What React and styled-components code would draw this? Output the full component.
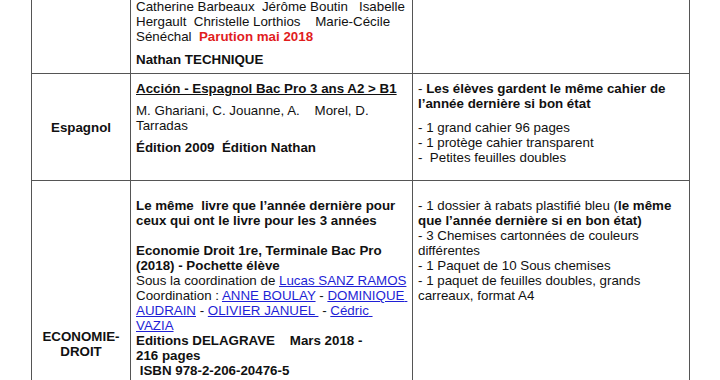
import React from "react";
import styled, { createGlobalStyle } from "styled-components";

const Global = createGlobalStyle`
  html, body { margin: 0; padding: 0; background: #fff; }
  body { font-family: "Liberation Sans", Arial, sans-serif; color: #111; overflow: hidden; }
`;

const Page = styled.div`
  width: 720px;
  height: 380px;
  overflow: hidden;
  padding-left: 31px;
  box-sizing: border-box;
`;

const Table = styled.table`
  border-collapse: collapse;
  table-layout: fixed;
  width: 659px;
  margin-top: -1px;
  font-size: 13.33px;
  line-height: 15px;
`;

const Row = styled.tr`
  height: ${(p) => p.$h}px;
`;

const Cell = styled.td`
  border: 1px solid #555;
  border-top: ${(p) => (p.$noTop ? "none" : "1px solid #555")};
  vertical-align: ${(p) => (p.$middle ? "middle" : "top")};
  text-align: ${(p) => (p.$middle ? "center" : "left")};
  font-weight: ${(p) => (p.$middle ? "bold" : "normal")};
  padding: ${(p) => p.$pt ?? 7}px 5px 6px 5px;
`;

const P = styled.p`
  margin: 0 0 ${(p) => p.$mb ?? 7}px 0;
  white-space: pre-wrap;
  font-weight: ${(p) => (p.$bold ? "bold" : "normal")};
  text-decoration: ${(p) => (p.$under ? "underline" : "none")};
`;

const Red = styled.span`
  color: #e11d1d;
  font-weight: bold;
`;

const Link = styled.a`
  color: #1f1fd6;
  text-decoration: underline;
`;

const B = styled.b``;

export default function App() {
  return (
    <Page>
      <Global />
      <Table>
        <colgroup>
          <col style={{ width: 99 }} />
          <col style={{ width: 282 }} />
          <col style={{ width: 277 }} />
        </colgroup>
        <tbody>
          <Row $h={73}>
            <Cell $middle $noTop $pt={0}></Cell>
            <Cell $noTop $pt={0}>
              <P $mb={8}>
                {"Catherine Barbeaux  Jérôme Boutin   Isabelle Hergault  Christelle Lorthios    Marie-Cécile Sénéchal  "}
                <Red>Parution mai 2018</Red>
              </P>
              <P $bold $mb={0}>Nathan TECHNIQUE</P>
            </Cell>
            <Cell $noTop $pt={0}></Cell>
          </Row>
          <Row $h={107}>
            <Cell $middle>Espagnol</Cell>
            <Cell>
              <P $bold $under>Acción - Espagnol Bac Pro 3 ans A2 &gt; B1</P>
              <P>{"M. Ghariani, C. Jouanne, A.    Morel, D. Tarradas"}</P>
              <P $bold $mb={0}>{"Édition 2009  Édition Nathan"}</P>
            </Cell>
            <Cell>
              <P $mb={9}>- <B>Les élèves gardent le même cahier de l’année dernière si bon état</B></P>
              <P $mb={0}>
                - 1 grand cahier 96 pages<br />
                - 1 protège cahier transparent<br />
                {"-  Petites feuilles doubles"}
              </P>
            </Cell>
          </Row>
          <Row $h={326}>
            <Cell $middle>ECONOMIE-<br />DROIT</Cell>
            <Cell $pt={17}>
              <P $bold $mb={0}>{"Le même  livre que l’année dernière pour ceux qui ont le livre pour les 3 années"}</P>
              <P $mb={0}>{"\u00a0"}</P>
              <P $bold $mb={0}>Economie Droit 1re, Terminale Bac Pro (2018) - Pochette élève</P>
              <P $mb={0}>
                Sous la coordination de <Link>Lucas SANZ RAMOS</Link><br />
                Coordination : <Link>ANNE BOULAY</Link> - <Link>DOMINIQUE AUDRAIN</Link> - <Link>OLIVIER JANUEL </Link> - <Link>Cédric VAZIA</Link>
              </P>
              <P $bold $mb={0}>
                {"Editions DELAGRAVE    Mars 2018 -"}<br />
                {"216 pages"}<br />
                {" ISBN 978-2-206-20476-5"}
              </P>
            </Cell>
            <Cell $pt={17}>
              <P $mb={0}>
                - 1 dossier à rabats plastifié bleu (<B>le même que l’année dernière si en bon état)</B><br />
                - 3 Chemises cartonnées de couleurs différentes<br />
                - 1 Paquet de 10 Sous chemises<br />
                - 1 paquet de feuilles doubles, grands carreaux, format A4
              </P>
            </Cell>
          </Row>
        </tbody>
      </Table>
    </Page>
  );
}
